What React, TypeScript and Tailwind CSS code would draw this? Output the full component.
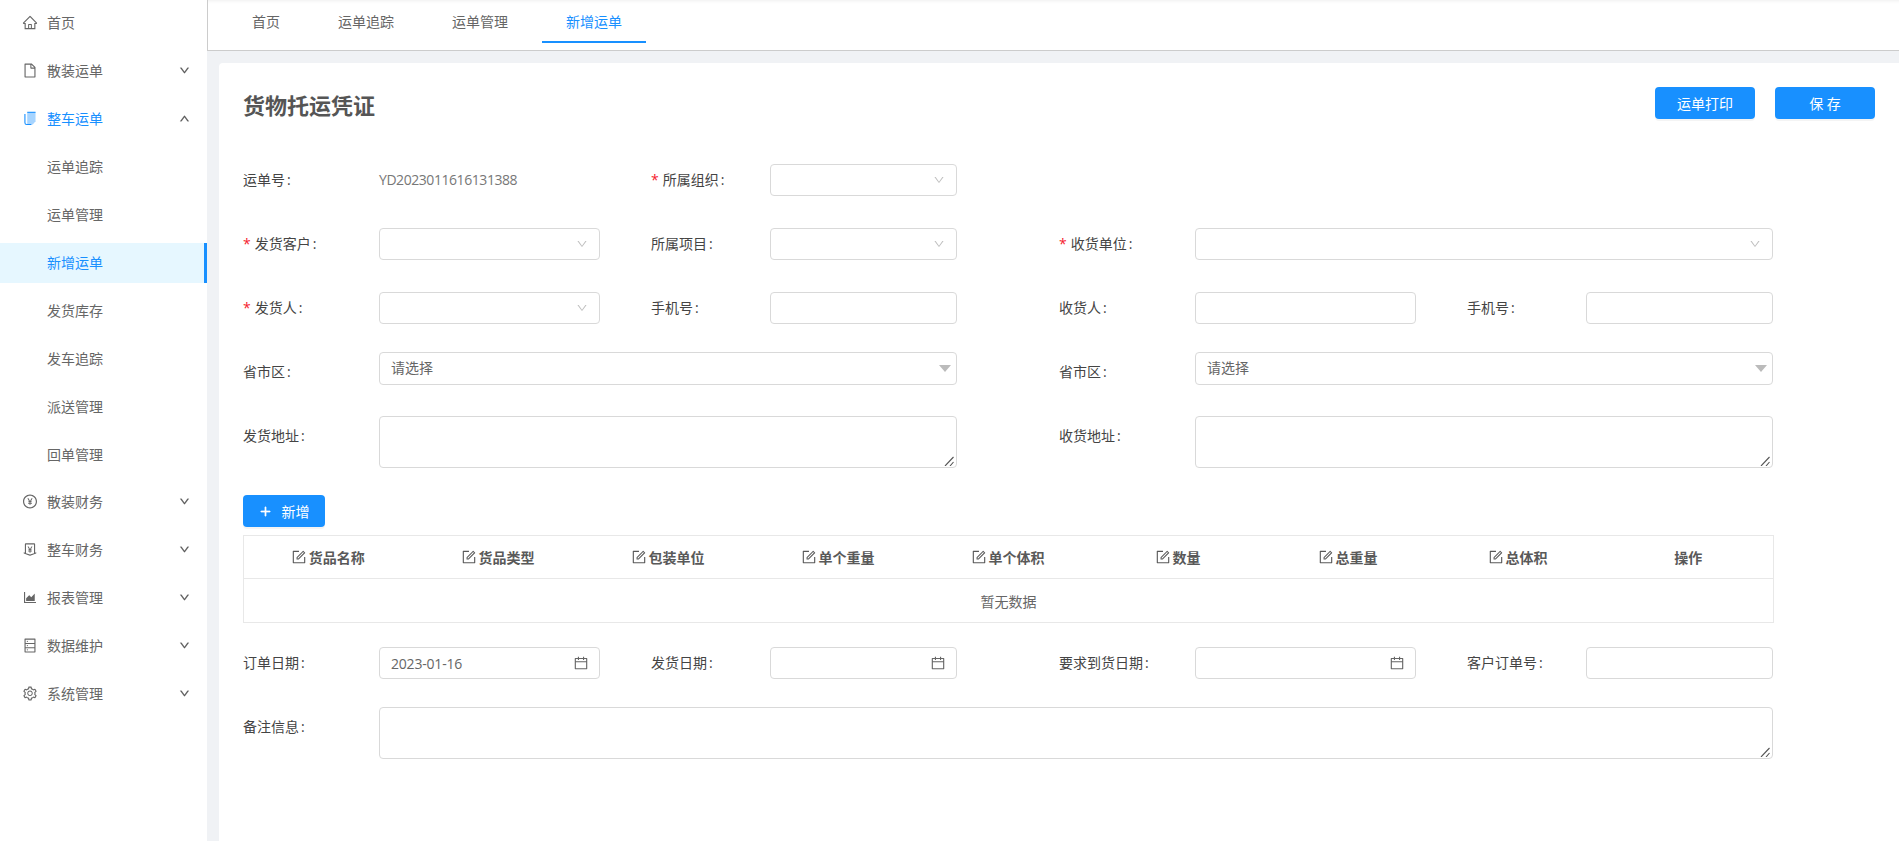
import type { ReactNode } from "react";
import {
  AiOutlineAreaChart,
  AiOutlineCalendar,
  AiOutlineDatabase,
  AiOutlineDown,
  AiOutlineFile,
  AiOutlineForm,
  AiOutlineHome,
  AiOutlineMoneyCollect,
  AiOutlinePayCircle,
  AiOutlinePlus,
  AiOutlineSetting,
  AiOutlineUp,
} from "react-icons/ai";

const subMenu = ["运单追踪", "运单管理", "新增运单", "发货库存", "发车追踪", "派送管理", "回单管理"];
const tabs = ["首页", "运单追踪", "运单管理", "新增运单"];
const columns = ["货品名称", "货品类型", "包装单位", "单个重量", "单个体积", "数量", "总重量", "总体积"];

function MenuItem({ icon, label, arrow }: { icon: ReactNode; label: string; arrow?: boolean }) {
  return (
    <div className="mb-2 flex h-10 items-center pb-[2px] pl-[22px] pr-[17px] text-[#666]">
      <span className="mr-[9px] flex w-4 justify-center text-[17px]">{icon}</span>
      <span className="flex-1">{label}</span>
      {arrow && <AiOutlineDown className="text-[11px] text-[#555] stroke-[40]" />}
    </div>
  );
}

// blue copy icon of the open menu group
function CopyIcon() {
  return (
    <svg width="12" height="15" viewBox="0 0 13 15">
      <path d="M3.5 1h9v9.5L9.5 14h-6z" fill="#a6d4ff" />
      <path d="M3.5 .8h9" stroke="#1890ff" strokeWidth="1.2" fill="none" />
      <path d="M1 2.5V12q0 2 2 2h5" stroke="#1890ff" strokeWidth="1.2" fill="none" />
    </svg>
  );
}

function Sidebar() {
  return (
    <aside className="w-[207px] shrink-0 bg-white pt-[3px]">
      <MenuItem icon={<AiOutlineHome />} label="首页" />
      <MenuItem icon={<AiOutlineFile />} label="散装运单" arrow />
      <div className="mb-2 flex h-10 items-center pb-[2px] pl-[22px] pr-[17px] text-[#1890ff]">
        <span className="mr-[9px] flex w-4 justify-center">
          <CopyIcon />
        </span>
        <span className="flex-1">整车运单</span>
        <AiOutlineUp className="text-[11px] text-[#555] stroke-[40]" />
      </div>
      <div className="mb-[-1px]">
        {subMenu.map((item) =>
          item === "新增运单" ? (
            <div
              key={item}
              className="mb-2 flex h-10 items-center border-r-[3px] border-[#1890ff] bg-[#e6f7ff] pb-[2px] pl-[47px] text-[#1890ff]"
            >
              {item}
            </div>
          ) : (
            <div key={item} className="mb-2 flex h-10 items-center pb-[2px] pl-[47px] text-[#666]">
              {item}
            </div>
          )
        )}
      </div>
      <MenuItem icon={<AiOutlinePayCircle />} label="散装财务" arrow />
      <MenuItem icon={<AiOutlineMoneyCollect />} label="整车财务" arrow />
      <MenuItem icon={<AiOutlineAreaChart />} label="报表管理" arrow />
      <MenuItem icon={<AiOutlineDatabase />} label="数据维护" arrow />
      <MenuItem icon={<AiOutlineSetting />} label="系统管理" arrow />
    </aside>
  );
}

function TopTabs() {
  return (
    <div className="flex h-[51px] shrink-0 gap-[10px] border-b border-l border-[#ccc] bg-white pl-5 shadow-[inset_0_4px_4px_-4px_rgba(0,0,0,0.1)]">
      {tabs.map((tab) =>
        tab === "新增运单" ? (
          <div key={tab} className="mb-[7px] flex items-center border-b-2 border-[#1890ff] px-6 pt-[2px] text-[#1890ff]">
            {tab}
          </div>
        ) : (
          <div key={tab} className="mb-[7px] flex items-center border-b-2 border-transparent px-6 pt-[2px] text-[#666]">
            {tab}
          </div>
        )
      )}
    </div>
  );
}

function Label({ text, width, required, top }: { text: string; width: string; required?: boolean; top?: boolean }) {
  return (
    <div className={`${width} ${top ? "mt-1" : ""} flex h-8 shrink-0 items-center pb-[2px] text-[#444]`}>
      {required && <span className="mr-1 text-[#f5222d]">*</span>}
      <span>{text}</span>
      <span className="ml-[2px]">:</span>
    </div>
  );
}

function SelectBox({ width }: { width: string }) {
  return (
    <div className={`${width} flex h-8 shrink-0 items-center justify-end rounded border border-[#d9d9d9] bg-white pr-[11px]`}>
      <AiOutlineDown className="text-[12px] text-[#bfbfbf]" />
    </div>
  );
}

function TextBox({ width }: { width: string }) {
  return <input className={`${width} h-8 shrink-0 rounded border border-[#d9d9d9] bg-white outline-none`} />;
}

function DateBox({ width, value }: { width: string; value?: string }) {
  return (
    <div className={`${width} flex h-8 shrink-0 items-center justify-between rounded border border-[#d9d9d9] bg-white pl-[11px] pr-[10px] text-[#666]`}>
      <span className="tracking-[-0.2px]">{value}</span>
      <AiOutlineCalendar className="text-[16px] text-[#666]" />
    </div>
  );
}

function Cascader({ width }: { width: string }) {
  return (
    <div className={`${width} flex h-[33px] shrink-0 items-center justify-between rounded border border-[#d9d9d9] bg-white pb-[2px] pl-[11px] pr-[5px] text-[#666]`}>
      <span>请选择</span>
      <span className="mt-[2px] h-0 w-0 border-x-[6px] border-t-[7px] border-x-transparent border-t-[#bbb]" />
    </div>
  );
}

function Area({ width }: { width: string }) {
  return (
    <div className={`${width} relative h-[52px] shrink-0`}>
      <textarea className="block h-full w-full resize-none rounded border border-[#d9d9d9] bg-white outline-none" />
      <svg className="absolute bottom-[2px] right-[3px] h-[10px] w-[10px]" viewBox="0 0 10 10">
        <path d="M1 10L9.5 1M6 10L9.5 6" stroke="#555" strokeWidth="1.1" fill="none" />
      </svg>
    </div>
  );
}

function GoodsTable() {
  return (
    <table className="mt-2 w-[1531px] table-fixed border-collapse border border-[#e8e8e8]">
      <thead>
        <tr className="h-[43px] border-b border-[#e8e8e8]">
          {columns.map((col) => (
            <th key={col} className="font-bold text-[#595959]">
              <span className="flex items-center justify-center gap-[2px] pr-[2px]">
                <AiOutlineForm className="text-[16px]" />
                {col}
              </span>
            </th>
          ))}
          <th className="font-bold text-[#595959]">操作</th>
        </tr>
      </thead>
      <tbody>
        <tr className="h-11">
          <td colSpan={9} className="pt-[1px] text-center text-[#666]">
            暂无数据
          </td>
        </tr>
      </tbody>
    </table>
  );
}

export default function App() {
  return (
    <div className="flex h-[841px] w-[1899px] overflow-hidden bg-[#f0f2f5] font-['Open_Sans','Noto_Sans_CJK_SC',sans-serif] text-[14px]">
      <Sidebar />
      <div className="flex flex-1 flex-col">
        <TopTabs />
        <main className="ml-3 mt-3 flex-1 rounded-tl bg-white pl-6 pr-6 pt-6">
          <div className="flex h-8 items-center justify-between">
            <h1 className="pt-[5px] text-[22px] font-bold text-[#555]">货物托运凭证</h1>
            <div className="flex gap-5">
              <button className="h-8 w-[100px] rounded bg-[#1890ff] text-white shadow-[0_2px_0_rgba(0,0,0,0.045)]">运单打印</button>
              <button className="h-8 w-[100px] rounded bg-[#1890ff] text-white shadow-[0_2px_0_rgba(0,0,0,0.045)]">保 存</button>
            </div>
          </div>

          <div className="mt-[45px] flex h-8">
            <Label text="运单号" width="w-[136px]" />
            <div className="flex w-[272px] shrink-0 items-center pb-[2px] tracking-[-0.44px] text-[#777]">YD2023011616131388</div>
            <Label text="所属组织" width="w-[119px]" required />
            <SelectBox width="w-[187px]" />
          </div>

          <div className="mt-8 flex h-8">
            <Label text="发货客户" width="w-[136px]" required />
            <SelectBox width="w-[221px]" />
            <div className="w-[51px] shrink-0" />
            <Label text="所属项目" width="w-[119px]" />
            <SelectBox width="w-[187px]" />
            <div className="w-[102px] shrink-0" />
            <Label text="收货单位" width="w-[136px]" required />
            <SelectBox width="w-[578px]" />
          </div>

          <div className="mt-8 flex h-8">
            <Label text="发货人" width="w-[136px]" required />
            <SelectBox width="w-[221px]" />
            <div className="w-[51px] shrink-0" />
            <Label text="手机号" width="w-[119px]" />
            <TextBox width="w-[187px]" />
            <div className="w-[102px] shrink-0" />
            <Label text="收货人" width="w-[136px]" />
            <TextBox width="w-[221px]" />
            <div className="w-[51px] shrink-0" />
            <Label text="手机号" width="w-[119px]" />
            <TextBox width="w-[187px]" />
          </div>

          <div className="mt-7 flex h-[33px]">
            <Label text="省市区" width="w-[136px]" top />
            <Cascader width="w-[578px]" />
            <div className="w-[102px] shrink-0" />
            <Label text="省市区" width="w-[136px]" top />
            <Cascader width="w-[578px]" />
          </div>

          <div className="mt-[31px] flex h-[52px]">
            <Label text="发货地址" width="w-[136px]" top />
            <Area width="w-[578px]" />
            <div className="w-[102px] shrink-0" />
            <Label text="收货地址" width="w-[136px]" top />
            <Area width="w-[578px]" />
          </div>

          <button className="mt-[27px] flex h-8 w-[82px] items-center justify-center gap-[10px] rounded bg-[#1890ff] text-white shadow-[0_2px_0_rgba(0,0,0,0.045)]">
            <AiOutlinePlus className="text-[13px] stroke-[60]" />
            新增
          </button>

          <GoodsTable />

          <div className="mt-6 flex h-8">
            <Label text="订单日期" width="w-[136px]" />
            <DateBox width="w-[221px]" value="2023-01-16" />
            <div className="w-[51px] shrink-0" />
            <Label text="发货日期" width="w-[119px]" />
            <DateBox width="w-[187px]" />
            <div className="w-[102px] shrink-0" />
            <Label text="要求到货日期" width="w-[136px]" />
            <DateBox width="w-[221px]" />
            <div className="w-[51px] shrink-0" />
            <Label text="客户订单号" width="w-[119px]" />
            <TextBox width="w-[187px]" />
          </div>

          <div className="mt-7 flex h-[52px]">
            <Label text="备注信息" width="w-[136px]" top />
            <Area width="w-[1394px]" />
          </div>
        </main>
      </div>
    </div>
  );
}
